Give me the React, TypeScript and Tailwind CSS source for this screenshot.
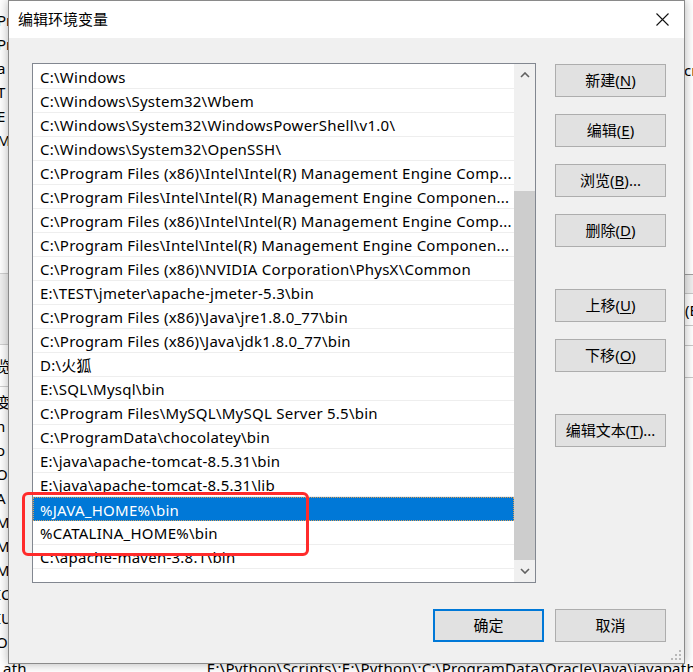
import React from "react";

const rows: string[] = [
  "C:\\Windows",
  "C:\\Windows\\System32\\Wbem",
  "C:\\Windows\\System32\\WindowsPowerShell\\v1.0\\",
  "C:\\Windows\\System32\\OpenSSH\\",
  "C:\\Program Files (x86)\\Intel\\Intel(R) Management Engine Comp...",
  "C:\\Program Files\\Intel\\Intel(R) Management Engine Componen...",
  "C:\\Program Files (x86)\\Intel\\Intel(R) Management Engine Comp...",
  "C:\\Program Files\\Intel\\Intel(R) Management Engine Componen...",
  "C:\\Program Files (x86)\\NVIDIA Corporation\\PhysX\\Common",
  "E:\\TEST\\jmeter\\apache-jmeter-5.3\\bin",
  "C:\\Program Files (x86)\\Java\\jre1.8.0_77\\bin",
  "C:\\Program Files (x86)\\Java\\jdk1.8.0_77\\bin",
  "D:\\火狐",
  "E:\\SQL\\Mysql\\bin",
  "C:\\Program Files\\MySQL\\MySQL Server 5.5\\bin",
  "C:\\ProgramData\\chocolatey\\bin",
  "E:\\java\\apache-tomcat-8.5.31\\bin",
  "E:\\java\\apache-tomcat-8.5.31\\lib",
  "%JAVA_HOME%\\bin",
  "%CATALINA_HOME%\\bin",
  "C:\\apache-maven-3.8.1\\bin",
];

function Btn({
  label,
  mn,
  suffix = "",
  className = "",
  primary = false,
}: {
  label: string;
  mn?: string;
  suffix?: string;
  className?: string;
  primary?: boolean;
}) {
  return (
    <div
      className={
        "w-[111px] h-[33px] bg-[#e1e1e1] flex items-center justify-center text-[15px] text-black " +
        (primary ? "border-2 border-[#0078d7] " : "border border-[#adadad] ") +
        className
      }
    >
      <span>
        {label}
        {mn ? (
          <>
            (<span className="underline underline-offset-2">{mn}</span>)
          </>
        ) : null}
        {suffix}
      </span>
    </div>
  );
}

function Chevron({ up }: { up: boolean }) {
  return (
    <svg width="10" height="6" viewBox="0 0 10 6">
      {up ? (
        <polyline points="1,5 5,1 9,5" fill="none" stroke="#606060" strokeWidth="1.6" />
      ) : (
        <polyline points="1,1 5,5 9,1" fill="none" stroke="#606060" strokeWidth="1.6" />
      )}
    </svg>
  );
}

export default function App() {
  const leftTop = ["Pr", "Pr", "a", "T", "E", "M"];
  const leftBottom = ["h", "o", "Or", "A", "M", "MA", "MY", "IC", "IU", "OS"];
  return (
    <div className="relative w-[693px] h-[672px] overflow-hidden bg-white font-['Noto_Sans','Noto_Sans_CJK_SC',sans-serif] text-black">
      {/* desktop behind the dialog */}
      <div className="flex flex-col w-full h-full">
        <div className="flex h-[664px]">
          <div className="w-[8px] flex flex-col text-[15px] leading-[24px] overflow-visible">
            <div className="pt-[8px] flex flex-col -ml-[3px]">
              {leftTop.map((t, i) => (
                <div key={i} className="h-[24px] whitespace-nowrap">{t}</div>
              ))}
            </div>
            <div className="mt-[121px] h-[72px] border-y border-[#d0d0d0] bg-[#f0f0f0]" />
            <div className="h-[41px] flex items-center -ml-[4px] whitespace-nowrap">览览</div>
            <div className="border-t border-[#d0d0d0] pt-[3px] flex flex-col -ml-[4px]">
              <div className="h-[24px] whitespace-nowrap">变量</div>
              {leftBottom.map((t, i) => (
                <div key={i} className="h-[24px] whitespace-nowrap">{t}</div>
              ))}
            </div>
          </div>
          <div className="flex-1" />
          <div className="w-[8px] flex flex-col text-[15px] leading-[24px] bg-[#e8e8e8]">
            <div className="h-[274px] bg-white pt-[58px]">
              <div className="-ml-[1px] whitespace-nowrap">cr</div>
            </div>
            <div className="h-[19px] border-t border-[#a0a0a0] bg-[#efefef]" />
            <div className="h-[32px] border-t border-[#c8c8c8] bg-white flex items-center whitespace-nowrap">(E</div>
            <div className="h-[20px] border-t border-[#c8c8c8] bg-white" />
            <div className="h-[32px] border-t border-[#c8c8c8] bg-white" />
            <div className="flex-1 border-t border-[#c8c8c8] bg-white" />
          </div>
        </div>
        <div className="h-[8px] relative overflow-hidden bg-white">
          <div className="flex -mt-[6px] text-[15px] leading-[20px] whitespace-nowrap tracking-[0.25px]">
            <span className="ml-[3px]">ath</span>
            <span className="ml-[180px]">E:\Python\Scripts\;E:\Python\;C:\ProgramData\Oracle\Java\javapath</span>
          </div>
        </div>
      </div>

      {/* dialog window */}
      <div className="absolute left-[8px] top-0 w-[677px] h-[664px] border border-[#8a8a8a] bg-[#f0f0f0] flex flex-col shadow-[0_0_10px_rgba(0,0,0,0.3)]">
        <div className="h-[37px] bg-white flex items-center justify-between pl-[9px] pr-[15px]">
          <span className="text-[15px]">编辑环境变量</span>
          <svg width="13" height="13" viewBox="0 0 13 13">
            <path d="M0.5 0.5 L12.5 12.5 M12.5 0.5 L0.5 12.5" stroke="#111" strokeWidth="1.1" />
          </svg>
        </div>
        <div className="flex-1 flex flex-col pl-[23px] pt-[25px] pr-[18px]">
          <div className="flex">
            <div className="w-[504px] h-[520px] border border-[#828790] bg-white flex">
              <div className="flex-1 pt-px flex flex-col overflow-hidden">
                {rows.map((r, i) => {
                  const sel = i === 18;
                  return (
                    <div
                      key={i}
                      className={
                        "h-[24px] shrink-0 flex items-center pl-[7px] pt-[2px] text-[15px] tracking-[0.25px] whitespace-nowrap overflow-hidden " +
                        (sel
                          ? "bg-[#0078d7] text-white border border-dotted border-[#d9a05a]"
                          : "border-b border-[#eeeeee]")
                      }
                    >
                      <span className={sel ? "-ml-px" : ""}>{r}</span>
                    </div>
                  );
                })}
              </div>
              <div className="w-[21px] bg-[#f0f0f0] flex flex-col">
                <div className="h-[22px] flex items-center justify-center">
                  <Chevron up={true} />
                </div>
                <div className="flex-1 flex flex-col">
                  <div className="mt-[105px] flex-1 bg-[#cdcdcd]" />
                </div>
                <div className="h-[22px] flex items-center justify-center">
                  <Chevron up={false} />
                </div>
              </div>
            </div>
            <div className="ml-[19px] mt-px flex flex-col">
              <Btn label="新建" mn="N" />
              <Btn label="编辑" mn="E" className="mt-[17px]" />
              <Btn label="浏览" mn="B" suffix="..." className="mt-[17px]" />
              <Btn label="删除" mn="D" className="mt-[17px]" />
              <Btn label="上移" mn="U" className="mt-[42px]" />
              <Btn label="下移" mn="O" className="mt-[17px]" />
              <Btn label="编辑文本" mn="T" suffix="..." className="mt-[42px]" />
            </div>
          </div>
          <div className="flex justify-end gap-[11px] mt-[26px]">
            <Btn label="确定" primary={true} />
            <Btn label="取消" />
          </div>
          <div className="flex-1 flex justify-end items-end pb-[3px] -mr-[15px]">
            <svg width="10" height="10" viewBox="0 0 10 10">
              <rect x="8" y="0" width="2" height="2" fill="#b8b8b8" />
              <rect x="4" y="4" width="2" height="2" fill="#b8b8b8" />
              <rect x="8" y="4" width="2" height="2" fill="#b8b8b8" />
              <rect x="0" y="8" width="2" height="2" fill="#b8b8b8" />
              <rect x="4" y="8" width="2" height="2" fill="#b8b8b8" />
              <rect x="8" y="8" width="2" height="2" fill="#b8b8b8" />
            </svg>
          </div>
        </div>
      </div>

      {/* red annotation */}
      <div className="absolute left-[22px] top-[492px] w-[287px] h-[64px] border-[3px] border-[#ff2b2b] rounded-[6px]" />
    </div>
  );
}
